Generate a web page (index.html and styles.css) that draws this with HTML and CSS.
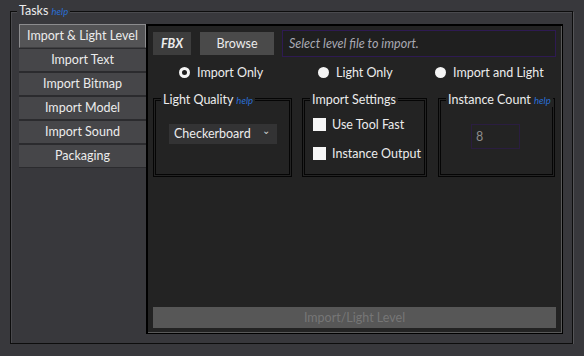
FILE: index.html
```html
<!DOCTYPE html>
<html>
<head>
    <meta charset="UTF-8">
    <title>Tasks</title>
    <link rel="stylesheet" href="styles.css">
</head>
<body>

<div class="tasks">
    <span class="legend">Tasks <i class="help">help</i></span>

    <ul class="tabs">
        <li class="cur">Import &amp; Light Level</li>
        <li>Import Text</li>
        <li>Import Bitmap</li>
        <li>Import Model</li>
        <li>Import Sound</li>
        <li>Packaging</li>
    </ul>

    <div class="panel">
        <div class="file-row">
            <span class="fbx">FBX</span>
            <button class="browse">Browse</button>
            <div class="path">Select level file to import.</div>
        </div>

        <div class="radios">
            <label><span class="radio on"></span>Import Only</label>
            <label><span class="radio"></span>Light Only</label>
            <label><span class="radio"></span>Import and Light</label>
        </div>

        <div class="groups">
            <div class="group quality">
                <span class="legend">Light Quality <i class="help">help</i></span>
                <div class="combo">Checkerboard<span class="chev">&#8964;</span></div>
            </div>
            <div class="group settings">
                <span class="legend">Import Settings</span>
                <label class="check"><span class="box"></span>Use Tool Fast</label>
                <label class="check"><span class="box"></span>Instance Output</label>
            </div>
            <div class="group count">
                <span class="legend">Instance Count <i class="help">help</i></span>
                <div class="num">8</div>
            </div>
        </div>

        <button class="run">Import/Light Level</button>
    </div>
</div>

</body>
</html>
```

FILE: styles.css
```css
* {
    margin: 0;
    padding: 0;
    box-sizing: border-box;
}

body {
    font: 12.5px/1.2 Lato, "Open Sans", sans-serif;
    background: #38383c;
    color: #ececec;
}

ul {
    list-style: none;
}

button {
    font: inherit;
    border: none;
}

.help {
    color: #2a6fd6;
    font-size: 9.5px;
    font-style: italic;
}

/* outer group */

.tasks {
    position: relative;
    display: flex;
    align-items: flex-start;
    margin: 11px 0 0 10px;
    width: 563px;
    height: 333px;
    padding: 12px 0 0 8px;
    border: 1px solid #0d0d0d;
    box-shadow: 1px 1px 0 #555558, inset 1px 1px 0 #4a4a4e;
}

.tasks > .legend {
    position: absolute;
    top: -9px;
    left: 6px;
    padding: 0 2px;
    background: #38383c;
}

/* tabs */

.tabs {
    width: 127px;
}

.tabs li {
    height: 24px;
    line-height: 22px;
    text-align: center;
    background: #464649;
    border-top: 1px solid #2b2b2e;
    border-bottom: 1px solid #2b2b2e;
    cursor: pointer;
}

.tabs li.cur {
    background: #545456;
    border: 1px solid #8c8c8e;
    border-bottom-color: #404042;
}

/* right panel */

.panel {
    display: flex;
    flex-direction: column;
    width: 417px;
    height: 310px;
    padding: 0 6px 5px 6px;
    background: #232323;
    border: 1px solid #000;
    box-shadow: inset 1px 1px 0 #000, inset -1px -1px 0 #5a5a5a;
}

.file-row {
    display: flex;
    align-items: center;
    margin-top: 5px;
    height: 27px;
}

.fbx {
    width: 38px;
    height: 23px;
    line-height: 23px;
    text-align: center;
    background: #3d3d3d;
    font-weight: bold;
    font-style: italic;
}

.browse {
    margin-left: 9px;
    width: 74px;
    height: 23px;
    background: #4a4a4a;
    color: #ececec;
}

.path {
    margin-left: 8px;
    width: 274px;
    height: 27px;
    line-height: 25px;
    padding-left: 6px;
    border: 1px solid #2e1a52;
    background: #1f1f1f;
    color: #a9a9b3;
    font-style: italic;
}

.radios {
    display: grid;
    grid-template-columns: 139px 117px 1fr;
    margin-top: 7px;
    padding-left: 26px;
    height: 16px;
}

.radios label {
    display: flex;
    align-items: center;
}

.radio {
    display: inline-block;
    margin-right: 7px;
    width: 11px;
    height: 11px;
    border-radius: 50%;
    background: #f4f4f4;
}

.radio.on {
    background: #1e1e1e;
    border: 3px solid #f4f4f4;
}

/* group boxes */

.groups {
    display: flex;
    margin-top: 18px;
}

.group {
    position: relative;
    height: 79px;
    border: 3px double #050505;
}

.group .legend {
    position: absolute;
    top: -9px;
    left: 5px;
    padding: 0 2px;
    background: #232323;
    white-space: nowrap;
}

.quality {
    width: 139px;
}

.settings {
    margin-left: 10px;
    width: 125px;
    padding: 16px 0 0 8px;
}

.count {
    margin-left: 11px;
    width: 117px;
}

.combo {
    position: relative;
    margin: 23px 0 0 13px;
    width: 108px;
    height: 20px;
    line-height: 20px;
    padding-left: 5px;
    background: #333334;
}

.chev {
    position: absolute;
    right: 7px;
    top: -4px;
    font-size: 10px;
    color: #cfcfcf;
}

.check {
    display: flex;
    align-items: center;
    height: 14px;
    margin-bottom: 15px;
    white-space: nowrap;
}

.box {
    display: inline-block;
    flex: none;
    margin-right: 6px;
    width: 13px;
    height: 13px;
    background: #f6f6f6;
}

.num {
    margin: 23px 0 0 30px;
    width: 49px;
    height: 25px;
    line-height: 23px;
    padding-left: 4px;
    border: 1px solid #2a1d40;
    color: #8e8e8e;
}

.run {
    margin-top: auto;
    width: 403px;
    height: 21px;
    background: #575757;
    color: #767676;
}
```
